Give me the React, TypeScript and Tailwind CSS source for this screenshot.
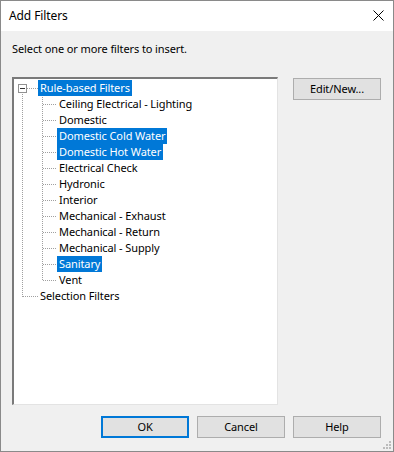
import React from "react";

const CHILDREN = [
  { label: "Ceiling Electrical - Lighting", selected: false },
  { label: "Domestic", selected: false },
  { label: "Domestic Cold Water", selected: true },
  { label: "Domestic Hot Water", selected: true },
  { label: "Electrical Check", selected: false },
  { label: "Hydronic", selected: false },
  { label: "Interior", selected: false },
  { label: "Mechanical - Exhaust", selected: false },
  { label: "Mechanical - Return", selected: false },
  { label: "Mechanical - Supply", selected: false },
  { label: "Sanitary", selected: true },
  { label: "Vent", selected: false },
];

const ROW = 16;

function TreeLines() {
  // rows start at y=1 inside the tree area, each 16px tall
  const mid = (i: number) => 1 + i * ROW + 8.5;
  const lastChild = CHILDREN.length;
  const sel = CHILDREN.length + 1;
  return (
    <svg
      className="pointer-events-none absolute left-0 top-0"
      width="80"
      height="320"
      shapeRendering="crispEdges"
    >
      <g stroke="#a0a0a0" strokeWidth="1" strokeDasharray="1 1" fill="none">
        <line x1="8.5" y1={mid(0) + 5} x2="8.5" y2={mid(sel)} />
        <line x1="13" y1={mid(0)} x2="24" y2={mid(0)} />
        <line x1="9" y1={mid(sel)} x2="24" y2={mid(sel)} />
        <line x1="28.5" y1={mid(0) + 8} x2="28.5" y2={mid(lastChild)} />
        {CHILDREN.map((_, i) => (
          <line key={i} x1="29" y1={mid(i + 1)} x2="43" y2={mid(i + 1)} />
        ))}
      </g>
      <rect x="4.5" y={mid(0) - 4} width="8" height="8" fill="#fff" stroke="#919191" />
      <line x1="6" y1={mid(0)} x2="11" y2={mid(0)} stroke="#333" />
    </svg>
  );
}

function Label({ text, selected }: { text: string; selected: boolean }) {
  return (
    <span
      className={
        "h-[16px] px-[2px] leading-[16px] " +
        (selected ? "bg-[#0078d7] text-white" : "text-black")
      }
    >
      {text}
    </span>
  );
}

function Button({ children, primary }: { children: React.ReactNode; primary?: boolean }) {
  return (
    <button
      type="button"
      className={
        "flex h-[22px] w-[88px] items-center justify-center bg-[#e1e1e1] text-black " +
        (primary ? "border-2 border-[#0078d7]" : "border border-[#adadad]")
      }
    >
      {children}
    </button>
  );
}

export default function App() {
  return (
    <div
      className="flex h-[452px] w-[394px] flex-col border border-[#8a8a8a] bg-[#f0f0f0] text-[11px] tracking-[-0.1px] text-black"
      style={{ fontFamily: '"Noto Sans", "Open Sans", sans-serif' }}
    >
      <div className="flex h-[30px] items-center justify-between bg-white pl-[8px] pr-[9px]">
        <span className="text-[12px]">Add Filters</span>
        <svg width="11" height="11" viewBox="0 0 11 11" className="mb-[1px]">
          <path d="M0.5 0.5 L10.5 10.5 M10.5 0.5 L0.5 10.5" stroke="#000" strokeWidth="1" />
        </svg>
      </div>

      <div className="flex flex-1 flex-col px-[11px]">
        <p className="mt-[10px] h-[15px] leading-[15px]">Select one or more filters to insert.</p>

        <div className="mt-[21px] flex gap-[15px]">
          <div className="h-[328px] w-[266px] border-t-2 border-l-2 border-r border-b border-t-[#7a7a7a] border-l-[#7a7a7a] border-r-[#e3e3e3] border-b-[#e3e3e3] bg-white">
            <div className="relative h-full">
              <TreeLines />
              <div className="flex flex-col pt-[1px]">
                <div className="flex h-[16px] pl-[24px]">
                  <Label text="Rule-based Filters" selected />
                </div>
                {CHILDREN.map((c) => (
                  <div key={c.label} className="flex h-[16px] pl-[43px]">
                    <Label text={c.label} selected={c.selected} />
                  </div>
                ))}
                <div className="flex h-[16px] pl-[24px]">
                  <Label text="Selection Filters" selected={false} />
                </div>
              </div>
            </div>
          </div>

          <div className="pt-[1px]">
            <button
              type="button"
              className="flex h-[22px] w-[88px] items-center justify-center border border-[#adadad] bg-[#e1e1e1]"
            >
              Edit/New...
            </button>
          </div>
        </div>

        <div className="mt-[11px] flex justify-end gap-[8px] pr-[1px]">
          <Button primary>OK</Button>
          <Button>Cancel</Button>
          <Button>Help</Button>
        </div>

        <div className="mt-auto flex justify-end pb-[1px]">
          <svg width="10" height="10" viewBox="0 0 10 10" className="-mr-[10px]">
            <g fill="#bcbcbc">
              <rect x="7" y="1" width="2" height="2" />
              <rect x="4" y="4" width="2" height="2" />
              <rect x="7" y="4" width="2" height="2" />
              <rect x="1" y="7" width="2" height="2" />
              <rect x="4" y="7" width="2" height="2" />
              <rect x="7" y="7" width="2" height="2" />
            </g>
          </svg>
        </div>
      </div>
    </div>
  );
}
